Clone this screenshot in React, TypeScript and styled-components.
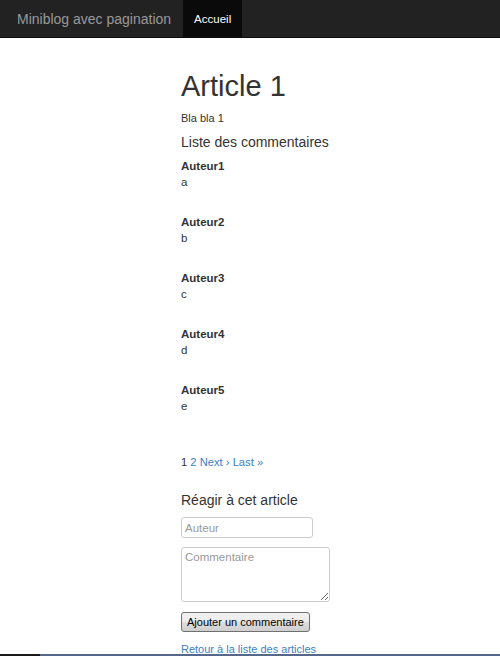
import React from 'react'
import styled, { createGlobalStyle } from 'styled-components'

const variables = {
  colorText: '#333333',
  colorLink: '#3a80c4',
  colorNav: '#222222',
  colorNavActive: '#0a0a0a',
  colorBrand: '#999999',
  colorBorder: '#cccccc'
};

const GlobalStyle = createGlobalStyle`
  html, body {
    margin: 0;
    padding: 0;
    background: #ffffff;
    font-family: "Liberation Sans", Arial, sans-serif;
    color: ${variables.colorText};
  }
`;

const Navbar = styled.nav`
  display: flex;
  align-items: stretch;
  height: 38px;
  background-color: ${variables.colorNav};
  border-bottom: 1px solid #0c0c0c;
  box-sizing: border-box;
`;
const Brand = styled.a`
  display: flex;
  align-items: center;
  padding: 0 12px 0 17px;
  color: ${variables.colorBrand};
  font-size: 14px;
  text-decoration: none;
`;
const NavItem = styled.a<{ $active?: boolean }>`
  display: flex;
  align-items: center;
  padding: 0 11px;
  font-size: 11.5px;
  color: ${p => (p.$active ? '#ffffff' : variables.colorBrand)};
  background-color: ${p => (p.$active ? variables.colorNavActive : 'transparent')};
  text-decoration: none;
`;

const Main = styled.main`
  display: flex;
  flex-direction: column;
  align-items: flex-start;
  padding: 0 0 0 181px;
`;
const Title = styled.h1`
  margin: 30px 0 5px;
  font-size: 29px;
  line-height: 36px;
  font-weight: normal;
`;
const Text = styled.p`
  margin: 0;
  font-size: 11px;
  line-height: 18px;
`;
const SubTitle = styled.h3<{ $top: number }>`
  margin: ${p => p.$top}px 0 0;
  font-size: 14px;
  line-height: 20px;
  font-weight: normal;
`;
const CommentList = styled.div`
  display: flex;
  flex-direction: column;
  gap: 24px;
  margin-top: 6px;
`;
const Comment = styled.div`
  font-size: 11.5px;
  line-height: 16px;
`;
const Author = styled.div`
  font-weight: bold;
`;
const Pagination = styled.div`
  margin-top: 40px;
  font-size: 11.2px;
  line-height: 16px;
  a {
    color: ${variables.colorLink};
    text-decoration: none;
  }
`;
const Form = styled.form`
  display: flex;
  flex-direction: column;
  align-items: flex-start;
`;
const Input = styled.input`
  margin-top: 7px;
  width: 132px;
  height: 21px;
  box-sizing: border-box;
  padding: 2px 3px;
  border: 1px solid ${variables.colorBorder};
  border-radius: 3px;
  font-family: inherit;
  font-size: 11.5px;
  color: ${variables.colorText};
  &::placeholder {
    color: #999999;
  }
`;
const TextArea = styled.textarea`
  margin-top: 9px;
  width: 149px;
  height: 55px;
  box-sizing: border-box;
  padding: 3px;
  border: 1px solid ${variables.colorBorder};
  border-radius: 3px;
  font-family: inherit;
  font-size: 11.5px;
  &::placeholder {
    color: #999999;
  }
`;
const Button = styled.button`
  margin-top: 10px;
  height: 20px;
  padding: 0 5px;
  border: 1px solid #707070;
  border-radius: 3px;
  background: linear-gradient(#f2f2f2, #ebebeb 50%, #dddddd 50%, #cfcfcf);
  font-family: inherit;
  font-size: 11px;
  color: #000000;
`;
const BackLink = styled.a`
  margin-top: 9px;
  font-size: 11px;
  line-height: 16px;
  color: ${variables.colorLink};
  text-decoration: none;
`;
const Taskbar = styled.div`
  position: fixed;
  left: 0;
  right: 0;
  bottom: 0;
  height: 2px;
  display: flex;
  background: #56688a;
  &::before {
    content: '';
    width: 40px;
    background: #1a1a1a;
  }
`;

const comments = [
  { author: 'Auteur1', body: 'a' },
  { author: 'Auteur2', body: 'b' },
  { author: 'Auteur3', body: 'c' },
  { author: 'Auteur4', body: 'd' },
  { author: 'Auteur5', body: 'e' }
];

const App: React.FC = () => (
  <>
    <GlobalStyle />
    <Navbar>
      <Brand href="#">Miniblog avec pagination</Brand>
      <NavItem href="#" $active>Accueil</NavItem>
    </Navbar>
    <Main>
      <Title>Article 1</Title>
      <Text>Bla bla 1</Text>
      <SubTitle $top={5}>Liste des commentaires</SubTitle>
      <CommentList>
        {comments.map(c => (
          <Comment key={c.author}>
            <Author>{c.author}</Author>
            <div>{c.body}</div>
          </Comment>
        ))}
      </CommentList>
      <Pagination>
        1 <a href="#">2</a> <a href="#">Next ›</a> <a href="#">Last »</a>
      </Pagination>
      <SubTitle $top={20}>Réagir à cet article</SubTitle>
      <Form onSubmit={e => e.preventDefault()}>
        <Input placeholder="Auteur" />
        <TextArea placeholder="Commentaire" />
        <Button type="submit">Ajouter un commentaire</Button>
      </Form>
      <BackLink href="#">Retour à la liste des articles</BackLink>
    </Main>
    <Taskbar />
  </>
);

export default App
